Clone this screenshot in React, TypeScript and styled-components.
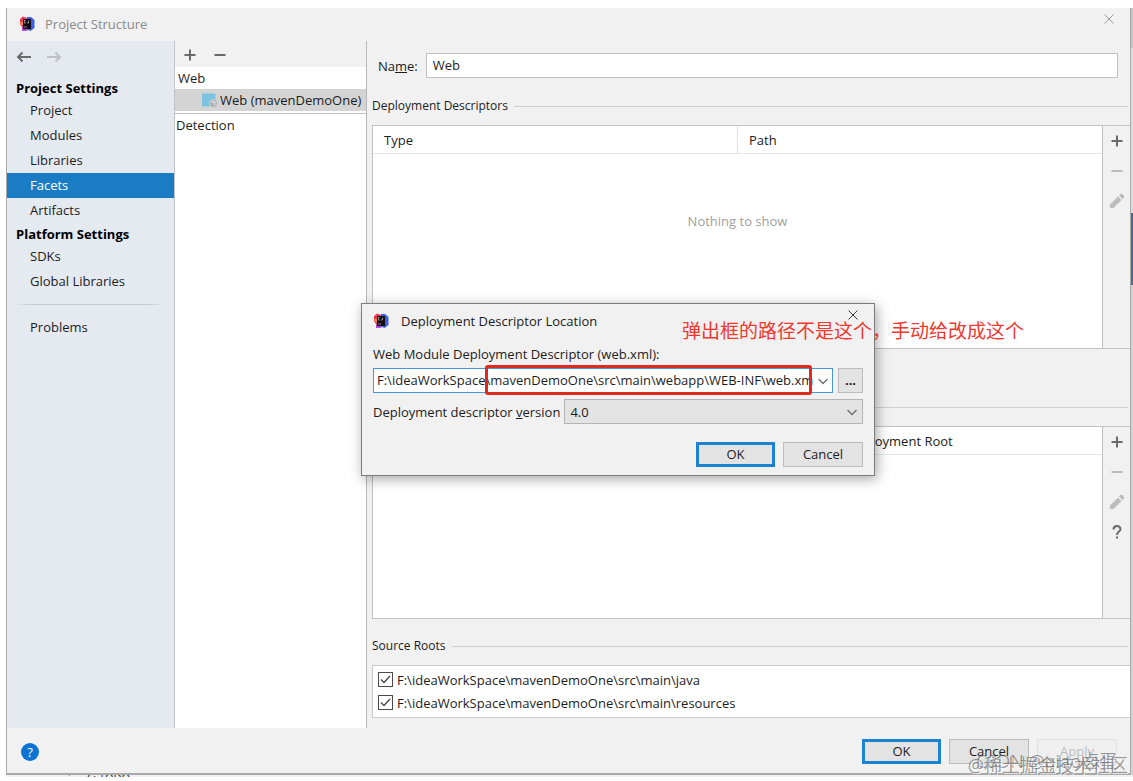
import React from "react";
import styled, { createGlobalStyle, css } from "styled-components";

const GlobalStyle = createGlobalStyle`
  *, *::before, *::after { box-sizing: border-box; }
  body {
    margin: 0;
    background: #ffffff;
    color: #1c1c1c;
    font: 13px/20px "Open Sans", "Noto Sans", "Noto Sans CJK SC", sans-serif;
  }
  button, input, select { font: inherit; color: inherit; margin: 0; }
  svg { display: block; flex: none; }
`;

const Page = styled.div`
  min-height: 100vh;
  display: flex;
  flex-direction: column;
  padding: 8px 0 4px 6px;
`;

const Desktop = styled.div`
  flex: 1;
  display: flex;
`;

const Frame = styled.main`
  position: relative;
  flex: 1;
  min-width: 0;
  display: flex;
  flex-direction: column;
  background: #f1f1f1;
  border: 1px solid #a9a9a9;
  border-width: 0 1px 2px 1px;
`;

const BackgroundEdge = styled.div`
  width: 2px;
  background: linear-gradient(#c6c6c6 0 40px, #dcdcdc 40px 205px, #4b6991 205px 277px, #d2d2d2 277px);
`;

const ToolWindowBar = styled.div`
  height: 2px;
  overflow: hidden;
  display: flex;
  gap: 6px;
  padding-left: 62px;
  background: #f0f0f0;
  line-height: 6px;
  font-size: 11px;
`;

const TitleBar = styled.header`
  display: flex;
  align-items: center;
  height: 33px;
  padding: 0 13px 2px 12px;
  gap: 10px;
  color: #8a8a8a;
`;

const Title = styled.h1`
  flex: 1;
  margin: 0;
  font-size: 13px;
  font-weight: 400;
`;

const IconButton = styled.button<{ $tone?: string; $top?: boolean }>`
  display: grid;
  place-items: center;
  width: 16px;
  height: 16px;
  padding: 0;
  border: 0;
  background: none;
  color: ${(p) => p.$tone ?? "#6a6a6a"};
  ${(p) => p.$top && css`align-self: flex-start; margin-top: 3px;`}
`;

const Body = styled.div`
  flex: 1;
  display: flex;
`;

const Sidebar = styled.nav`
  width: 168px;
  flex: none;
  background: #e5e9f0;
  border-right: 1px solid #c2c4c8;
`;

const History = styled.div`
  display: flex;
  gap: 14px;
  padding: 8px 9px 12px;
`;

const NavHeading = styled.h2`
  margin: 0;
  padding: 2px 0 0 9px;
  font-size: 13px;
  line-height: 19px;
  font-weight: 700;
  color: #000000;
`;

const NavList = styled.ul`
  list-style: none;
  margin: 0;
  padding: 0;
`;

const NavLink = styled.a<{ $active?: boolean }>`
  display: block;
  padding-left: 23px;
  line-height: 25px;
  text-decoration: none;
  color: ${(p) => (p.$active ? "#ffffff" : "#1c1c1c")};
  background: ${(p) => (p.$active ? "#1a7dc4" : "transparent")};
`;

const NavRule = styled.hr`
  height: 1px;
  margin: 10px 9px;
  border: 0;
  background: linear-gradient(90deg, transparent, #c4c7cc 12%, #c4c7cc 88%, transparent);
`;

const FacetPane = styled.section`
  width: 192px;
  flex: none;
  background: #ffffff;
  border-right: 1px solid #b9b9b9;
`;

const FacetToolbar = styled.div`
  display: flex;
  gap: 14px;
  padding: 6px 7px 4px;
  background: #f1f1f1;
`;

const FacetRow = styled.div<{ $selected?: boolean; $level?: number }>`
  display: flex;
  align-items: center;
  gap: 2px;
  height: 22px;
  padding-left: ${(p) => (p.$level ? 27 : 3)}px;
  white-space: nowrap;
  background: ${(p) => (p.$selected ? "#d4d4d4" : "transparent")};
`;

const Detection = styled.div`
  margin-top: 2px;
  padding-left: 1px;
  line-height: 22px;
  border-top: 1px solid #bdbdbd;
`;

const Editor = styled.section`
  flex: 1;
  min-width: 0;
  display: flex;
  flex-direction: column;
  padding: 12px 0 10px 5px;
`;

const NameRow = styled.div`
  display: flex;
  align-items: center;
  gap: 8px;
  padding: 0 12px 0 6px;
  margin-bottom: 18px;
`;

const TextInput = styled.input`
  flex: 1;
  min-width: 0;
  height: 25px;
  padding: 0 6px 1px;
  border: 1px solid #c0c0c0;
  background: #ffffff;
  outline: 0;
`;

const Group = styled.section<{ $grow?: number; $gap?: number }>`
  display: flex;
  flex-direction: column;
  flex: ${(p) => (p.$grow ? `${p.$grow} 0 auto` : "none")};
  margin-bottom: ${(p) => p.$gap ?? 0}px;
`;

const GroupTitle = styled.h2`
  display: flex;
  align-items: center;
  gap: 6px;
  margin: 0 2px 9px 0;
  font-size: 12px;
  line-height: 20px;
  font-weight: 400;
  &::after {
    content: "";
    flex: 1;
    height: 1px;
    background: #cfcfcf;
  }
`;

const TablePanel = styled.div<{ $min: number }>`
  flex: 1;
  display: flex;
  min-height: ${(p) => p.$min}px;
  border: 1px solid #c3c3c3;
  border-right: 0;
`;

const TableArea = styled.div`
  flex: 1;
  display: flex;
  flex-direction: column;
  background: #ffffff;
`;

const DataTable = styled.table`
  width: 100%;
  table-layout: fixed;
  border-collapse: collapse;
`;

const HeadCell = styled.th`
  height: 27px;
  padding: 2px 11px 0;
  text-align: left;
  font-weight: 400;
  border-bottom: 1px solid #e8e8e8;
  & + & { border-left: 1px solid #e0e0e0; }
`;

const Empty = styled.p`
  margin: 57px 0 0;
  text-align: center;
  color: #a0a0a0;
`;

const SideTools = styled.div`
  display: flex;
  flex-direction: column;
  align-items: center;
  gap: 14px;
  width: 28px;
  padding-top: 7px;
  border-left: 1px solid #c3c3c3;
`;

const RootList = styled.div`
  display: flex;
  flex-direction: column;
  padding: 2px 5px 3px;
  border: 1px solid #c9c9c9;
  border-right: 0;
  background: #ffffff;
`;

const RootItem = styled.label`
  display: flex;
  align-items: center;
  gap: 4px;
  height: 23px;
`;

const CheckWrap = styled.span`
  display: grid;
  place-items: center;
  & > * { grid-area: 1 / 1; }
  svg { pointer-events: none; }
`;

const CheckInput = styled.input`
  appearance: none;
  width: 15px;
  height: 15px;
  border: 1px solid #4a4a4a;
  background: #ffffff;
`;

const Footer = styled.footer`
  position: relative;
  display: flex;
  align-items: center;
  gap: 8px;
  height: 45px;
  padding: 2px 13px 0 14px;
`;

const HelpButton = styled.button`
  width: 18px;
  height: 18px;
  margin-right: auto;
  padding: 0;
  border: 0;
  border-radius: 50%;
  background: #0a74d4;
  color: #ffffff;
  line-height: 18px;
`;

const PushButton = styled.button<{ $primary?: boolean }>`
  width: ${(p) => (p.$primary ? 79 : 80)}px;
  height: 25px;
  padding: 0 0 1px;
  background: #e3e3e3;
  border: ${(p) => (p.$primary ? "3px solid #1b83d0" : "1px solid #bcbcbc")};
  line-height: 18px;
  &:disabled {
    color: #bdbdbd;
    background: #efefef;
    border-color: #e2e2e2;
  }
`;

const Watermark = styled.span<{ $right: number; $bottom: number }>`
  position: absolute;
  right: ${(p) => p.$right}px;
  bottom: ${(p) => p.$bottom}px;
  font-size: 18px;
  line-height: 24px;
  white-space: nowrap;
  color: rgba(90, 90, 90, 0.6);
  text-shadow: 1px 1px 0 rgba(255, 255, 255, 0.7);
  pointer-events: none;
`;

const Dialog = styled.section`
  position: absolute;
  left: 354px;
  top: 295px;
  width: 514px;
  padding: 0 11px 8px;
  background: #f1f1f1;
  border: 1px solid #7c7c7c;
  box-shadow: 2px 3px 12px rgba(0, 0, 0, 0.35);
`;

const DialogTitle = styled.header`
  display: flex;
  align-items: center;
  gap: 12px;
  height: 36px;
  padding: 0 2px 2px 0;
`;

const DialogLabel = styled.label`
  display: block;
  line-height: 28px;
  white-space: nowrap;
`;

const DialogRow = styled.div<{ $gap: number; $bottom?: number }>`
  display: flex;
  align-items: center;
  gap: ${(p) => p.$gap}px;
  margin-bottom: ${(p) => p.$bottom ?? 0}px;
`;

const Combo = styled.div`
  position: relative;
  flex: 1;
  display: flex;
  align-items: center;
  height: 25px;
  padding-right: 1px;
  border: 1px solid #4a95d6;
  background: #ffffff;
`;

const ComboInput = styled.input`
  flex: 1;
  min-width: 0;
  padding: 0 0 1px 3px;
  border: 0;
  background: none;
  outline: 0;
`;

const Highlight = styled.div`
  position: absolute;
  left: 111px;
  right: 20px;
  top: -4px;
  bottom: -3px;
  border: 3px solid #e0291f;
  border-radius: 3px;
  pointer-events: none;
`;

const BrowseButton = styled(PushButton)`
  width: 25px;
  font-weight: 700;
`;

const SelectWrap = styled.div`
  flex: 1;
  display: grid;
  align-items: center;
  & > * { grid-area: 1 / 1; }
  svg { justify-self: end; margin-right: 4px; pointer-events: none; }
`;

const Select = styled.select`
  appearance: none;
  width: 100%;
  height: 25px;
  padding: 0 5px;
  border: 1px solid #b4b4b4;
  border-radius: 0;
  background: #e3e3e3;
`;

const DialogActions = styled.div`
  display: flex;
  justify-content: flex-end;
  gap: 8px;
`;

const Annotation = styled.p`
  position: absolute;
  left: 320px;
  top: 14px;
  margin: 0;
  font: 19px/24px "Noto Sans CJK SC", sans-serif;
  white-space: nowrap;
  color: #f0382e;
`;

const AppLogo = () => (
  <svg width="16" height="16" viewBox="0 0 16 16" aria-hidden="true">
    <path d="M1 3 4 .5 8 2 5 9 5 15l-2-1 0-3-2-3z" fill="#f4345c" />
    <path d="M3 11h6l-1 4-5 0z" fill="#b24bd8" />
    <path d="m8 1 4 0 3.500 3v8l-4 3-5-2z" fill="#3c5fe8" />
    <path d="M1 6h3v3H2z" fill="#f98a3c" />
    <path d="M4 3h8v10H4z" fill="#120c12" />
    <path d="M5 4.500h1.500M5.700 4.500v2.500M5 7h1.500M9.500 4.500V7H8M5 11h3" stroke="#d8d8d8" strokeWidth=".6" fill="none" />
  </svg>
);

const Arrow = ({ flip }: { flip?: boolean }) => (
  <svg width="16" height="16" viewBox="0 0 16 16" fill="none" stroke="currentColor" strokeWidth="2" aria-hidden="true">
    <path d={flip ? "M1 8h13M9.500 3.500 14 8l-4.500 4.500" : "M15 8H2M6.500 3.500 2 8l4.500 4.500"} />
  </svg>
);

const Plus = () => (
  <svg width="16" height="16" viewBox="0 0 16 16" stroke="currentColor" strokeWidth="2" aria-hidden="true">
    <path d="M8 2.500v11M2.500 8h11" />
  </svg>
);

const Minus = () => (
  <svg width="16" height="16" viewBox="0 0 16 16" stroke="currentColor" strokeWidth="2" aria-hidden="true">
    <path d="M2.500 8h11" />
  </svg>
);

const Pencil = () => (
  <svg width="16" height="16" viewBox="0 0 16 16" fill="currentColor" aria-hidden="true">
    <path d="M1 15v-3.500L9 3.500 12.500 7l-8 8zM10 2.500 11.500 1q1-.6 1.800 0L15 2.700q.6 1 0 1.800L13.500 6z" />
  </svg>
);

const Question = () => (
  <svg width="16" height="16" viewBox="0 0 16 16" fill="none" stroke="currentColor" strokeWidth="2" aria-hidden="true">
    <path d="M4.500 5.500C4.500 1 11.500 1 11.500 5.200 11.500 7.500 8 7.800 8 11M8 12.500v2" />
  </svg>
);

const Close = () => (
  <svg width="10" height="10" viewBox="0 0 10 10" stroke="currentColor" aria-hidden="true">
    <path d="m.5.5 9 9M9.500.5l-9 9" />
  </svg>
);

const Chevron = () => (
  <svg width="14" height="14" viewBox="0 0 14 14" fill="none" stroke="#6e6e6e" strokeWidth="1.300" aria-hidden="true">
    <path d="m2.500 5 4.500 4.500L11.500 5" />
  </svg>
);

const WebFacetIcon = () => (
  <svg width="16" height="16" viewBox="0 0 16 16" aria-hidden="true">
    <path d="M0 1.500h13.500v7L8 14.500H0z" fill="#7cc3df" />
    <circle cx="11.500" cy="11.500" r="4" fill="#a9b0b5" stroke="#d4d4d4" />
    <path d="m9 9.500 3 1 1 3M11 9l3 2" stroke="#e2e5e7" fill="none" />
  </svg>
);

type Row = { label: string; active?: boolean };

const projectItems: Row[] = [
  { label: "Project" },
  { label: "Modules" },
  { label: "Libraries" },
  { label: "Facets", active: true },
  { label: "Artifacts" },
];
const platformItems: Row[] = [{ label: "SDKs" }, { label: "Global Libraries" }];
const sourceRoots = [
  "F:\\ideaWorkSpace\\mavenDemoOne\\src\\main\\java",
  "F:\\ideaWorkSpace\\mavenDemoOne\\src\\main\\resources",
];

const Nav = ({ items }: { items: Row[] }) => (
  <NavList>
    {items.map((item) => (
      <li key={item.label}>
        <NavLink href="#" $active={item.active}>{item.label}</NavLink>
      </li>
    ))}
  </NavList>
);

const EditableTable = ({
  columns,
  min,
  empty,
  help,
}: {
  columns: string[];
  min: number;
  empty?: string;
  help?: boolean;
}) => (
  <TablePanel $min={min}>
    <TableArea>
      <DataTable>
        <thead>
          <tr>
            {columns.map((c) => (
              <HeadCell key={c} scope="col">{c}</HeadCell>
            ))}
          </tr>
        </thead>
      </DataTable>
      {empty && <Empty>{empty}</Empty>}
    </TableArea>
    <SideTools>
      <IconButton aria-label="Add"><Plus /></IconButton>
      <IconButton aria-label="Remove" $tone="#bcbcbc"><Minus /></IconButton>
      <IconButton aria-label="Edit" $tone="#bcbcbc"><Pencil /></IconButton>
      {help && <IconButton aria-label="Help"><Question /></IconButton>}
    </SideTools>
  </TablePanel>
);

const DescriptorDialog = () => (
  <Dialog role="dialog" aria-label="Deployment Descriptor Location">
    <DialogTitle>
      <AppLogo />
      <Title as="h2">Deployment Descriptor Location</Title>
      <IconButton aria-label="Close dialog" $tone="#3c3c3c" $top><Close /></IconButton>
    </DialogTitle>
    <DialogLabel htmlFor="descriptor">Web Module Deployment Descriptor (web.xml):</DialogLabel>
    <DialogRow $gap={5} $bottom={6}>
      <Combo>
        <ComboInput id="descriptor" defaultValue={"F:\\ideaWorkSpace\\mavenDemoOne\\src\\main\\webapp\\WEB-INF\\web.xm"} />
        <IconButton aria-label="Show recent paths"><Chevron /></IconButton>
        <Highlight />
      </Combo>
      <BrowseButton aria-label="Browse">...</BrowseButton>
    </DialogRow>
    <DialogRow $gap={4} $bottom={18}>
      <label htmlFor="version">Deployment descriptor <u>v</u>ersion</label>
      <SelectWrap>
        <Select id="version" defaultValue="4.0"><option>4.0</option></Select>
        <Chevron />
      </SelectWrap>
    </DialogRow>
    <DialogActions>
      <PushButton $primary>OK</PushButton>
      <PushButton>Cancel</PushButton>
    </DialogActions>
    <Annotation>弹出框的路径不是这个，手动给改成这个</Annotation>
  </Dialog>
);

export default function App() {
  return (
    <Page>
      <GlobalStyle />
      <Desktop>
        <Frame>
          <TitleBar>
            <AppLogo />
            <Title>Project Structure</Title>
            <IconButton aria-label="Close" $tone="#9a9a9a" $top><Close /></IconButton>
          </TitleBar>
          <Body>
            <Sidebar>
              <History>
                <IconButton aria-label="Back"><Arrow /></IconButton>
                <IconButton aria-label="Forward" $tone="#bdc0c4"><Arrow flip /></IconButton>
              </History>
              <NavHeading>Project Settings</NavHeading>
              <Nav items={projectItems} />
              <NavHeading>Platform Settings</NavHeading>
              <Nav items={platformItems} />
              <NavRule />
              <Nav items={[{ label: "Problems" }]} />
            </Sidebar>
            <FacetPane>
              <FacetToolbar>
                <IconButton aria-label="Add facet"><Plus /></IconButton>
                <IconButton aria-label="Remove facet"><Minus /></IconButton>
              </FacetToolbar>
              <FacetRow>Web</FacetRow>
              <FacetRow $selected $level={1}><WebFacetIcon />Web (mavenDemoOne)</FacetRow>
              <Detection>Detection</Detection>
            </FacetPane>
            <Editor>
              <NameRow>
                <label htmlFor="facet-name">Na<u>m</u>e:</label>
                <TextInput id="facet-name" defaultValue="Web" />
              </NameRow>
              <Group $grow={1} $gap={48}>
                <GroupTitle>Deployment Descriptors</GroupTitle>
                <EditableTable columns={["Type", "Path"]} min={224} empty="Nothing to show" />
              </Group>
              <Group $grow={1} $gap={17}>
                <GroupTitle>Web Resource Directories</GroupTitle>
                <EditableTable
                  columns={["Web Resource Directory", "Path Relative to Deployment Root"]}
                  min={193}
                  help
                />
              </Group>
              <Group>
                <GroupTitle>Source Roots</GroupTitle>
                <RootList>
                  {sourceRoots.map((root) => (
                    <RootItem key={root}>
                      <CheckWrap>
                        <CheckInput type="checkbox" defaultChecked />
                        <svg width="11" height="11" viewBox="0 0 11 11" fill="none" stroke="#4a4a4a" strokeWidth="1.400">
                          <path d="m1 5.500 3 3 6-6.500" />
                        </svg>
                      </CheckWrap>
                      {root}
                    </RootItem>
                  ))}
                </RootList>
              </Group>
            </Editor>
          </Body>
          <Footer>
            <HelpButton aria-label="Help">?</HelpButton>
            <PushButton $primary>OK</PushButton>
            <PushButton>Cancel</PushButton>
            <PushButton disabled>Apply</PushButton>
            <Watermark $right={13} $bottom={0}>CSDN @qiao卤蛋</Watermark>
            <Watermark $right={2} $bottom={-4}>@稀土掘金技术社区</Watermark>
          </Footer>
          <DescriptorDialog />
        </Frame>
        <BackgroundEdge />
      </Desktop>
      <ToolWindowBar><span>⁝☰</span><span>6: TODO</span></ToolWindowBar>
    </Page>
  );
}
